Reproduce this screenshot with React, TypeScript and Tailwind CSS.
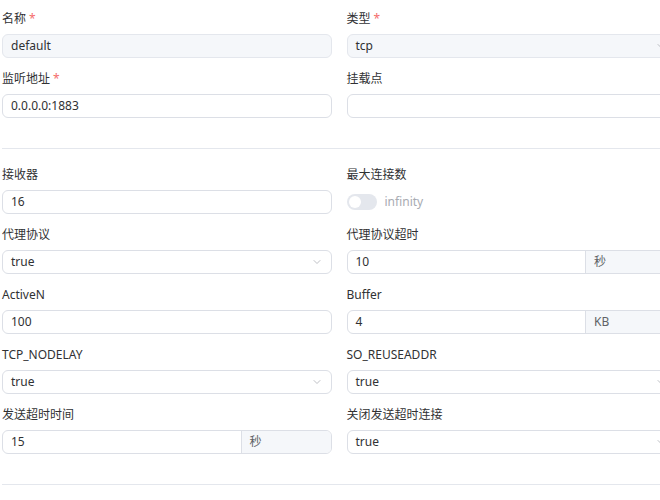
import { ChevronDown } from 'lucide-react';

const font = { fontFamily: '"Noto Sans", "Noto Sans CJK SC", sans-serif' };

function Label({ text, required }: { text: string; required?: boolean }) {
  return (
    <div className="h-[14px] mb-[8px] text-[12px] leading-[14px] text-[#303133]">
      {text}
      {required && <span className="text-[#f56c6c] ml-[3px]">*</span>}
    </div>
  );
}

function Input({ value = '', disabled, select, suffix }: { value?: string; disabled?: boolean; select?: boolean; suffix?: string }) {
  return (
    <div className={`flex h-[24px] rounded-[6px] border overflow-hidden text-[12px] text-[#303133] ${disabled ? 'bg-[#f5f7fa] border-[#e4e7ed]' : 'bg-white border-[#dcdfe6]'}`}>
      <div className="flex-1 flex items-center px-[8px]">{value}</div>
      {select && <ChevronDown className="w-3 h-3 text-[#a8abb2] self-center mr-[8px]" strokeWidth={1.5} />}
      {suffix && <div className="w-[90px] bg-[#f5f7fa] border-l border-[#dcdfe6] flex items-center px-[8px] text-[#606266]">{suffix}</div>}
    </div>
  );
}

function Field({ label, required, children }: { label: string; required?: boolean; children: React.ReactNode }) {
  return (
    <div className="h-[60px] pt-[12px]">
      <Label text={label} required={required} />
      {children}
    </div>
  );
}

export default function App() {
  return (
    <div className="w-[660px] h-[500px] overflow-hidden bg-white" style={font}>
      <div className="w-[676px] pl-[2px]">
        <div className="grid grid-cols-2 gap-x-[15px]">
          <Field label="名称" required><Input value="default" disabled /></Field>
          <Field label="类型" required><Input value="tcp" disabled select /></Field>
          <Field label="监听地址" required><Input value="0.0.0.0:1883" /></Field>
          <Field label="挂载点"><Input /></Field>
        </div>
        <div className="mt-[28px] mb-[7px] h-px bg-[#e4e7ed]" />
        <div className="grid grid-cols-2 gap-x-[15px]">
          <Field label="接收器"><Input value="16" /></Field>
          <Field label="最大连接数">
            <div className="flex items-center h-[24px] gap-[8px]">
              <div className="w-[30px] h-[16px] rounded-full bg-[#e4e7ed] flex items-center px-[2px]">
                <div className="w-[12px] h-[12px] rounded-full bg-white" />
              </div>
              <span className="text-[12px] text-[#a8abb2]">infinity</span>
            </div>
          </Field>
          <Field label="代理协议"><Input value="true" select /></Field>
          <Field label="代理协议超时"><Input value="10" suffix="秒" /></Field>
          <Field label="ActiveN"><Input value="100" /></Field>
          <Field label="Buffer"><Input value="4" suffix="KB" /></Field>
          <Field label="TCP_NODELAY"><Input value="true" select /></Field>
          <Field label="SO_REUSEADDR"><Input value="true" select /></Field>
          <Field label="发送超时时间"><Input value="15" suffix="秒" /></Field>
          <Field label="关闭发送超时连接"><Input value="true" select /></Field>
        </div>
        <div className="mt-[28px] h-px bg-[#e4e7ed]" />
      </div>
    </div>
  );
}
